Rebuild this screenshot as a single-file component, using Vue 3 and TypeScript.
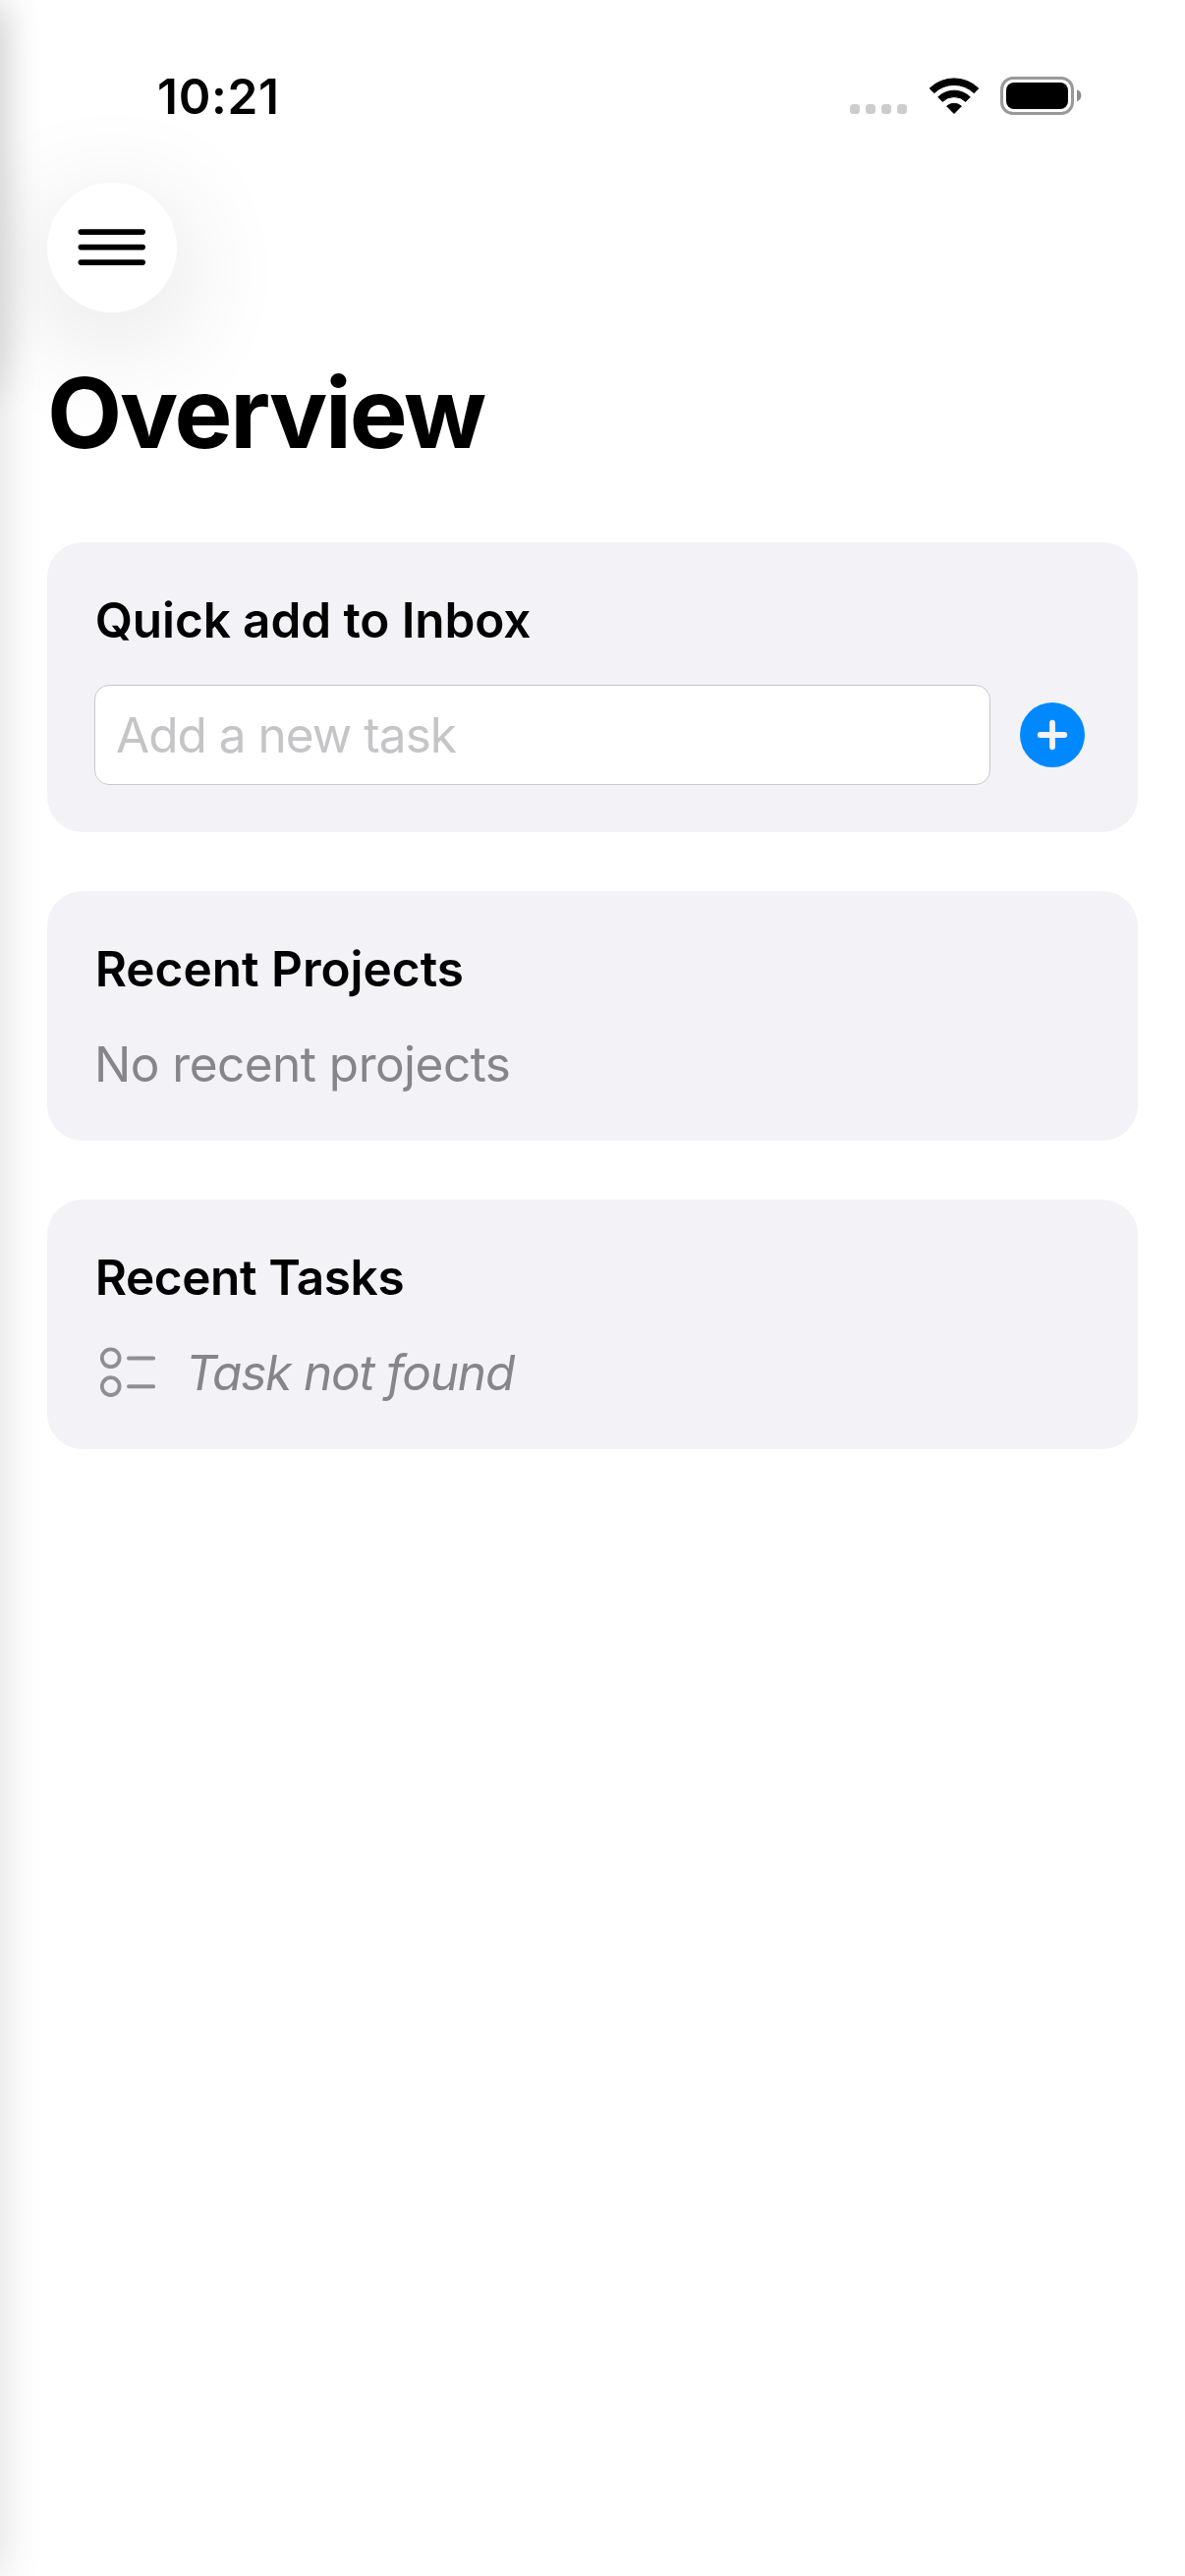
<script setup lang="ts">
import { ref } from 'vue'

const time = '10:21'
const draft = ref('')
const signalDots = [0, 1, 2, 3]
</script>

<template>
  <div class="screen">
    <div class="edge-shadow"></div>
    <div class="edge-shadow edge-shadow-top"></div>

    <div class="status-bar">
      <span class="time">{{ time }}</span>
      <div class="indicators">
        <div class="signal">
          <i v-for="d in signalDots" :key="d"></i>
        </div>
        <svg class="wifi" width="52" height="39" viewBox="0 0 52 39">
          <path d="M1.2 12 A35.5 35.5 0 0 1 50.8 12 L46.2 16.6 A29 29 0 0 0 5.8 16.6 Z" stroke="#000" stroke-width="1" stroke-linejoin="round" />
          <path d="M9.7 20.8 A23.3 23.3 0 0 1 42.3 20.8 L37.7 25.4 A16.6 16.6 0 0 0 14.3 25.4 Z" stroke="#000" stroke-width="1" stroke-linejoin="round" />
          <path d="M18.6 30 A11.5 11.5 0 0 1 33.4 30 L26 37.5 Z" stroke="#000" stroke-width="1" stroke-linejoin="round" />
        </svg>
        <svg class="battery" width="83" height="39" viewBox="0 0 83 39">
          <rect x="1.5" y="1.5" width="72" height="36" rx="11.5" fill="none" stroke="#999" stroke-width="3" />
          <rect x="6" y="6" width="63" height="27" rx="8" />
          <path d="M78 13.3 A6.3 6.3 0 0 1 78 25.3 Z" fill="#8c8c8c" />
        </svg>
      </div>
    </div>

    <header class="header">
      <button class="menu" aria-label="Menu">
        <svg width="70" height="38" viewBox="0 0 70 38" stroke="#000" stroke-width="5.6" stroke-linecap="round">
          <path d="M3.3 3.1H66.2M3.3 18.6H66.2M3.3 34.1H66.2" />
        </svg>
      </button>
      <h1>Overview</h1>
    </header>

    <main class="cards">
      <section class="card">
        <h2 class="quick">Quick add to Inbox</h2>
        <div class="add-row">
          <input v-model="draft" class="field" type="text" placeholder="Add a new task" />
          <svg class="add" width="66" height="66" viewBox="0 0 66 66">
            <circle cx="33" cy="33" r="33" fill="#0088ff" />
            <path d="M20.7 33H45.3M33 20.7V45.3" stroke="#f2f2f7" stroke-width="5.8" stroke-linecap="round" />
          </svg>
        </div>
      </section>

      <section class="card">
        <h2 class="projects">Recent Projects</h2>
        <p class="empty">No recent projects</p>
      </section>

      <section class="card">
        <h2 class="tasks">Recent Tasks</h2>
        <div class="task">
          <svg width="58" height="52" viewBox="0 0 58 52" fill="none" stroke="#8f8e93">
            <g stroke-width="3.8">
              <circle cx="10.7" cy="11.3" r="8.9" />
              <circle cx="10.7" cy="40.1" r="8.9" />
            </g>
            <path d="M29 11.4H54.1M29 40.2H54.1" stroke-width="4" stroke-linecap="round" />
          </svg>
          <p class="missing">Task not found</p>
        </div>
      </section>
    </main>
  </div>
</template>

<style>
body {
  margin: 0;
  background: #fff;
}
</style>

<style scoped>
.screen {
  position: relative;
  width: 1206px;
  height: 2622px;
  overflow: hidden;
  background: #fff;
  color: #000;
  font-family: Inter, "Liberation Sans", sans-serif;
  font-size: 49.5px;
  line-height: 60px;
}

.edge-shadow {
  position: absolute;
  left: -40px;
  top: 0;
  width: 40px;
  height: 2622px;
  box-shadow: 0 0 44px rgba(0, 0, 0, 0.15);
  pointer-events: none;
}
.edge-shadow-top {
  top: 10px;
  height: 382px;
  box-shadow: 0 0 44px rgba(0, 0, 0, 0.13);
}

.status-bar {
  display: flex;
  justify-content: space-between;
  align-items: flex-start;
  height: 118px;
  padding: 68px 105px 0 160px;
}
.time {
  font-weight: 600;
  letter-spacing: 0.7px;
}
.indicators {
  display: flex;
  align-items: flex-end;
  height: 39px;
  padding-top: 10px;
}
.signal {
  display: flex;
  gap: 6px;
  margin: 0 21.5px 1px 0;
}
.signal i {
  width: 10px;
  height: 10px;
  border-radius: 3.5px;
  background: #ccc;
}
.battery {
  margin-left: 21.5px;
}

.header {
  padding: 0 48px;
}
.menu {
  display: flex;
  align-items: center;
  justify-content: center;
  width: 132px;
  height: 132px;
  padding: 0;
  border: 0;
  border-radius: 50%;
  background: #fff;
  box-shadow: 0 24px 120px rgba(0, 0, 0, 0.14);
}
h1 {
  margin: 42px 0 0;
  font-size: 99px;
  font-weight: 700;
  line-height: 120px;
  letter-spacing: -2.2px;
}

.cards {
  display: flex;
  flex-direction: column;
  gap: 60px;
  padding: 72px 48px 0;
}
.card {
  position: relative;
  display: flex;
  flex-direction: column;
  gap: 37px;
  padding: 49px 48px 48px;
  border-radius: 36px;
  background: #f2f2f7;
}
h2 {
  margin: 0;
  padding-left: 0.7px;
  font-size: 49.5px;
  font-weight: 600;
}
.quick {
  margin-bottom: -1px;
  letter-spacing: -0.1px;
}
.projects {
  letter-spacing: 0;
}
.tasks {
  letter-spacing: -0.4px;
}

.add-row {
  display: flex;
  align-items: center;
  gap: 30px;
}
.field {
  box-sizing: border-box;
  width: 912px;
  height: 102px;
  padding: 0 21px;
  border: 1px solid #c9c9cb;
  border-radius: 15px;
  outline: none;
  background: #fff;
  color: #000;
  font: inherit;
  letter-spacing: -0.97px;
}
.field::placeholder {
  color: #c5c4c7;
  opacity: 1;
}
.add {
  flex: none;
}

p {
  margin: 0;
  color: #86858a;
}
.empty {
  letter-spacing: -0.52px;
}
.task {
  display: flex;
  align-items: center;
  gap: 29px;
  padding-left: 6px;
}
.missing {
  font-style: italic;
  letter-spacing: -1.17px;
}
</style>
